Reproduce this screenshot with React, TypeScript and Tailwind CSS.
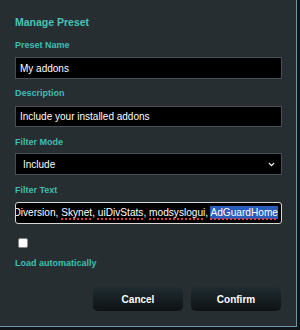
import { ChevronDown } from "lucide-react";

const labelCls = "h-[11px] leading-[11px] text-[9px] font-bold text-[#3fbeb0]";
const inputCls =
  "w-[267px] bg-black border border-[#4a4f52] text-white text-[10px] flex items-center";

function SpellWord({ children }: { children: string }) {
  return (
    <span className="underline decoration-dotted decoration-[#e23a3a] decoration-[1.5px] underline-offset-[2px]">
      {children}
    </span>
  );
}

export default function App() {
  return (
    <div
      className="w-[300px] h-[330px] bg-[#121517] overflow-hidden"
      style={{ fontFamily: "'Liberation Sans', Arial, sans-serif" }}
    >
      <div className="w-[297px] h-[327px] bg-[#262e32] border-r border-b border-[#6a98ab] pl-[15px] pt-[16px] flex flex-col">
        <div className="h-[12px] leading-[12px] text-[10.5px] font-bold text-[#48c4b5]">Manage Preset</div>

        <div className={`${labelCls} mt-[12px]`}>Preset Name</div>
        <div className={`${inputCls} h-[22px] mt-[6px] pl-[4px]`}>My addons</div>

        <div className={`${labelCls} mt-[9px]`}>Description</div>
        <div className={`${inputCls} h-[21px] mt-[7px] pl-[4px]`}>Include your installed addons</div>

        <div className={`${labelCls} mt-[10px]`}>Filter Mode</div>
        <div className={`${inputCls} h-[22px] mt-[5px] pl-[7px] pr-[5px] justify-between`}>
          <span>Include</span>
          <ChevronDown size={9} strokeWidth={3.5} className="text-white" />
        </div>

        <div className={`${labelCls} mt-[10px]`}>Filter Text</div>
        <div className="w-[267px] h-[22px] mt-[6px] bg-black border border-[#d6d6d6] rounded-[3px] text-white text-[10.15px] flex items-center justify-end overflow-hidden pr-[3px] whitespace-nowrap">
          <span>
            Diversion, <SpellWord>Skynet</SpellWord>, <SpellWord>uiDivStats</SpellWord>,{" "}
            <SpellWord>modsyslogui</SpellWord>,{" "}
            <span className="bg-[#2a5bbd] py-[1px]">
              <SpellWord>AdGuardHome</SpellWord>
            </span>
          </span>
        </div>

        <div className="mt-[14px] pl-[3px]">
          <div className="w-[10px] h-[10px] bg-white rounded-[2px] border border-[#888]" />
        </div>

        <div className={`${labelCls} mt-[10px]`}>Load automatically</div>

        <div className="mt-[18px] w-[267px] flex justify-end gap-[8px] pr-[1px]">
          <button className="w-[90px] h-[24px] rounded-[5px] bg-gradient-to-b from-[#1f2c32] to-[#0e1214] text-white text-[10px] font-bold">
            Cancel
          </button>
          <button className="w-[90px] h-[24px] rounded-[5px] bg-gradient-to-b from-[#1f2c32] to-[#0e1214] text-white text-[10px] font-bold">
            Confirm
          </button>
        </div>
      </div>
    </div>
  );
}
